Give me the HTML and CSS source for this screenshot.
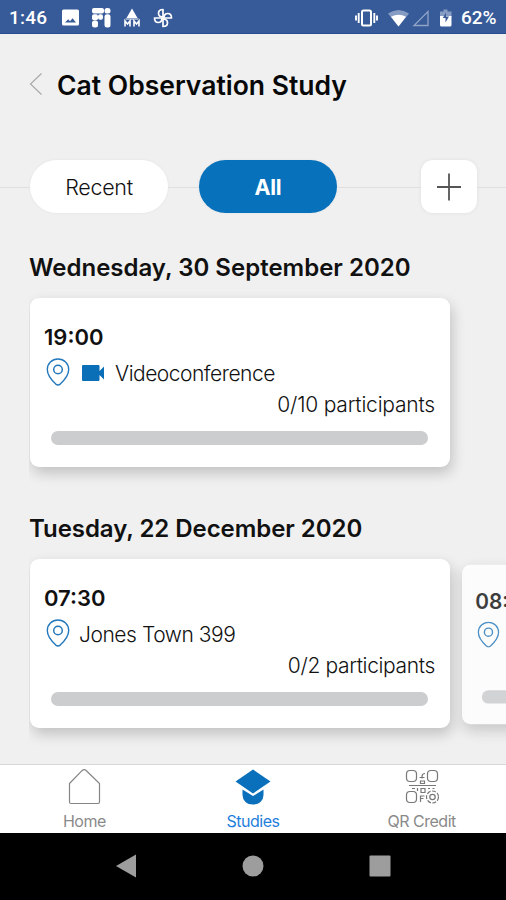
FILE: index.html
```html
<!DOCTYPE html>
<html lang="en">
<head>
<meta charset="utf-8">
<meta name="viewport" content="width=device-width">
<title>Cat Observation Study</title>
<link rel="stylesheet" href="styles.css">
</head>
<body>
<svg class="defs" width="0" height="0">
  <symbol id="pin" viewBox="0 0 24 28">
    <path d="M12 1C6 1 1.300 5.600 1.300 11.500C1.300 17.500 6.500 23 9.800 26.100Q12 28 14.200 26.100C17.500 23 22.700 17.500 22.700 11.500C22.700 5.600 18 1 12 1Z" fill="none" stroke="currentColor" stroke-width="1.400"/>
    <circle cx="12" cy="11.500" r="4.300" fill="none" stroke="currentColor" stroke-width="1.500"/>
  </symbol>
</svg>
<div class="phone">
  <div class="status">
    <span class="clock">1:46</span>
    <svg class="status-left" width="116" height="22" viewBox="0 0 116 22" fill="#fff">
      <path fill-rule="evenodd" d="M3.500 2.500h14a1.500 1.500 0 0 1 1.500 1.500v13a1.500 1.500 0 0 1-1.500 1.500h-14A1.500 1.500 0 0 1 2 17V4a1.500 1.500 0 0 1 1.500-1.500ZM5 15.500h11l-3.400-4.200-2.600 3-1.800-2Z"/>
      <rect x="32" y="1" width="12" height="5.500" rx="2"/><rect x="44.500" y="1" width="6" height="5.500" rx="2.500"/>
      <rect x="32" y="7.200" width="6" height="6" rx="2"/><rect x="38" y="7.200" width="5" height="5.500" rx="2"/>
      <rect x="32" y="13.500" width="6" height="7" rx="2.500"/><rect x="44.500" y="7.200" width="6" height="13.300" rx="2.500"/>
      <path d="M72 1.500l5.500 9.500H66.500Z"/>
      <path d="M65 19.500v-5.500l2.500 3 2.500-3v5.500M74 19.500v-5.500l2.500 3 2.500-3v5.500" fill="none" stroke="#fff" stroke-width="1.600"/>
      <path d="M65.500 12h13" stroke="#fff" stroke-width="1"/>
      <g fill="none" stroke="#fff" stroke-width="1.700" stroke-linejoin="round">
        <path id="petal" d="M103 11V2.500C97 2.500 97 10 103 10"/>
        <use href="#petal" transform="rotate(90 103 11)"/>
        <use href="#petal" transform="rotate(180 103 11)"/>
        <use href="#petal" transform="rotate(270 103 11)"/>
      </g>
    </svg>
    <svg class="status-right" width="104" height="22" viewBox="0 0 104 22">
      <rect x="9" y="3.500" width="9" height="15" rx="1.500" fill="none" stroke="#fff" stroke-width="2"/>
      <path d="M5.700 6v10M21.300 6v10M3 8.500v5M24 8.500v5" stroke="#fff" stroke-width="1.900"/>
      <path d="M35 6.500Q45.500-.5 56 6.500L45.500 19.500Z" fill="#fff" opacity=".4"/>
      <path d="M38 9.800Q45.500 5.500 53 9.800L45.500 19.500Z" fill="#fff"/>
      <path d="M75 4.500v14H61Z" fill="none" stroke="#fff" stroke-opacity=".45" stroke-width="1.300"/>
      <path d="M90.500 2.500h4v2h4V10H87V4.500h3.500Z" fill="#fff" opacity=".4"/>
      <path d="M87 9h11.500v9q0 1.500-1.500 1.500h-8.500Q87 19.500 87 18Z" fill="#fff"/>
      <path d="M93 5.500L89.800 11H92.500V15.500l3.500-6H93Z" fill="#3a5b97"/>
    </svg>
    <span class="percent">62%</span>
  </div>
  <header class="header">
    <svg class="back" width="14" height="24" viewBox="0 0 14 24"><path d="M12.500 1.500L1.500 12l11 10.500" fill="none" stroke="#aaa" stroke-width="1.200"/></svg>
    <h1 class="title">Cat Observation Study</h1>
  </header>
  <nav class="filters">
    <span class="line line-start"></span>
    <button class="pill">Recent</button>
    <span class="line line-gap"></span>
    <button class="pill active">All</button>
    <span class="line line-fill"></span>
    <button class="add"><svg width="26" height="28" viewBox="0 0 26 28"><path d="M13 .5v27M1 14h24" stroke="#555" stroke-width="1.800"/></svg></button>
    <span class="line line-end"></span>
  </nav>
  <main class="content">
    <section class="day">
      <h2 class="date">Wednesday, 30 September 2020</h2>
      <div class="row">
        <article class="card">
          <div class="time">19:00</div>
          <div class="place"><svg class="pin"><use href="#pin"/></svg><svg class="camera" width="23" height="16" viewBox="0 0 23 16"><path d="M1 0h15.500Q17.500 0 17.500 1V6l4.500-4.500v13L17.500 10v5Q17.500 16 16.500 16H1Q0 16 0 15V1Q0 0 1 0Z" fill="#0b6fb8"/></svg><span class="video">Videoconference</span></div>
          <div class="count">0/10 participants</div>
          <div class="bar"></div>
        </article>
      </div>
    </section>
    <section class="day">
      <h2 class="date date-b">Tuesday, 22 December 2020</h2>
      <div class="row">
        <article class="card">
          <div class="time">07:30</div>
          <div class="place"><svg class="pin"><use href="#pin"/></svg><span class="town">Jones Town 399</span></div>
          <div class="count count-b">0/2 participants</div>
          <div class="bar"></div>
        </article>
        <article class="card next">
          <div class="time">08:</div>
          <div class="place"><svg class="pin"><use href="#pin"/></svg></div>
          <div class="count"></div>
          <div class="bar"></div>
        </article>
      </div>
    </section>
  </main>
  <nav class="tabs">
    <div class="tab">
      <svg width="36" height="38" viewBox="0 0 36 38"><path d="M3.500 15.500L16 2.700q2.200-2 4.400 0L33.500 15.500V34q0 1.500-1.500 1.500H5Q3.500 35.500 3.500 34Z" fill="none" stroke="#858585" stroke-width="1.200"/></svg>
      <span class="label">Home</span>
    </div>
    <div class="tab selected">
      <svg width="36" height="38" viewBox="0 0 36 38" fill="#0b70bb"><path d="M18 1.500L35.500 13.500 18 25.500 .5 13.500Z"/><path d="M7.500 21.500L18 28l10.500-6.500V27q0 4-3 7-2.500 2.500-7.500 2.500T10.500 34q-3-3-3-7Z"/></svg>
      <span class="label">Studies</span>
    </div>
    <div class="tab">
      <svg width="36" height="38" viewBox="0 0 36 38" fill="none" stroke="#777" stroke-width="1.200">
        <rect x="2.500" y="2.500" width="10" height="11" rx="3.500"/><rect x="23.500" y="2.500" width="10" height="11" rx="3.500"/><rect x="2.500" y="23.500" width="10" height="11" rx="3.500"/>
        <path d="M5 17.500h27M21 5.500q-3 0-3 3v2M15.500 9.500h5M16.500 13h4v2.500h-4ZM8 20.500h3M13.500 20v3M17 20.500h4v4h-4ZM24 20.500h2M28.500 20.500h2M16.500 34v-6h4M16.500 30.500h3"/>
        <circle cx="28.500" cy="29" r="6" stroke-dasharray="4 1.400"/><circle cx="28.500" cy="29" r="2.700"/>
      </svg>
      <span class="label">QR Credit</span>
    </div>
  </nav>
  <div class="system">
    <div class="key"><svg width="24" height="24" viewBox="0 0 24 24"><path d="M2 12L22 .5v23Z" fill="#9d9d9d"/></svg></div>
    <div class="key"><svg width="24" height="24" viewBox="0 0 24 24"><circle cx="12" cy="12" r="10.500" fill="#9d9d9d"/></svg></div>
    <div class="key"><svg width="24" height="24" viewBox="0 0 24 24"><rect x="1.500" y="1.500" width="21" height="21" rx="1" fill="#9d9d9d"/></svg></div>
  </div>
</div>
</body>
</html>
```
FILE: styles.css
```css
* { box-sizing: border-box; }
body { margin: 0; background: #f0f0f0; font-family: Inter, "Liberation Sans", sans-serif; color: #111; }
h1, h2 { margin: 0; font-weight: 600; white-space: nowrap; }
button { border: 0; padding: 0; font: inherit; color: inherit; }
svg { display: block; flex: none; }
.defs { position: absolute; }
.phone { width: 506px; height: 900px; display: flex; flex-direction: column; overflow: hidden; }
.status { height: 34px; flex: none; background: #375a99; border-bottom: 1px solid #2a4c92; color: #fff; display: flex; align-items: center; padding: 2px 7px 0 9px; font-family: Roboto, sans-serif; font-size: 19px; font-weight: 500; }
.clock { width: 51px; letter-spacing: .2px; }
.status-right { margin-left: auto; }
.percent { margin-left: 4px; width: 38px; white-space: nowrap; }
.header { height: 101px; flex: none; display: flex; align-items: center; padding-left: 29px; }
.back { margin-top: -2px; }
.title { font-size: 26.500px; margin-left: 14px; color: #080808; }
.filters { height: 104px; flex: none; display: flex; align-items: center; padding-bottom: 1px; }
.pill { width: 138px; height: 53px; border-radius: 27px; background: #fff; font-size: 21.500px; font-weight: 300; letter-spacing: -.3px; box-shadow: 0 0 3px rgba(0,0,0,.06); }
.pill.active { background: #0871bb; color: #fff; font-weight: 700; }
.line { height: 1px; background: #dfdfdf; position: relative; top: 1px; }
.line-start { width: 30px; }
.line-gap { width: 31px; }
.line-fill { flex: 1; margin-left: 1px; }
.line-end { width: 29px; }
.add { width: 56px; height: 53px; border-radius: 12px; background: #fff; display: flex; align-items: center; justify-content: center; box-shadow: 0 0 4px rgba(0,0,0,.07); }
.content { height: 525px; flex: none; padding-left: 29px; overflow: hidden; }
.day { height: 261px; }
.date { height: 59px; line-height: 58px; font-size: 24px; }
.date-b { letter-spacing: -.05px; }
.row { height: 202px; padding: 0 0 33px 1px; display: flex; align-items: center; gap: 12px; clip-path: inset(-12px 0 0 0); }
.card { width: 420px; height: 169px; flex: none; background: #fff; border-radius: 9px; padding: 25px 15px 0 14px; box-shadow: 2px 6px 14px rgba(0,0,0,.2); }
.time { height: 28px; line-height: 28px; font-size: 22px; font-weight: 600; }
.place { height: 45px; display: flex; align-items: center; margin-top: -1px; font-size: 21px; font-weight: 300; }
.pin { width: 24px; height: 28px; margin: -1px 0 0 2px; color: #2479bc; }
.camera { margin-left: 12px; }
.video { margin: 2px 0 0 10px; letter-spacing: -.5px; }
.town { margin: 2px 0 0 9px; letter-spacing: -.45px; }
.count { height: 26px; margin-top: -3px; line-height: 25px; text-align: right; font-size: 21px; font-weight: 300; letter-spacing: -.2px; white-space: nowrap; }
.count-b { letter-spacing: -.35px; }
.bar { height: 14px; border-radius: 7px; background: #cbcdcf; margin: 13px 7px 0; }
.next { transform: translateY(1px) scale(.945); transform-origin: left center; opacity: .8; }
.tabs { height: 69px; flex: none; background: #fff; border-top: 1px solid #d6d6d6; display: flex; }
.tab { flex: 1; display: flex; flex-direction: column; align-items: center; padding-top: 3px; color: #8a8a8a; }
.label { font-size: 16px; line-height: 20px; margin-top: 5px; letter-spacing: -.5px; white-space: nowrap; }
.selected { color: #1f7fdc; }
.system { height: 67px; flex: none; background: #000; display: flex; justify-content: center; padding-bottom: 1px; }
.key { width: 127px; display: flex; align-items: center; justify-content: center; }
```
